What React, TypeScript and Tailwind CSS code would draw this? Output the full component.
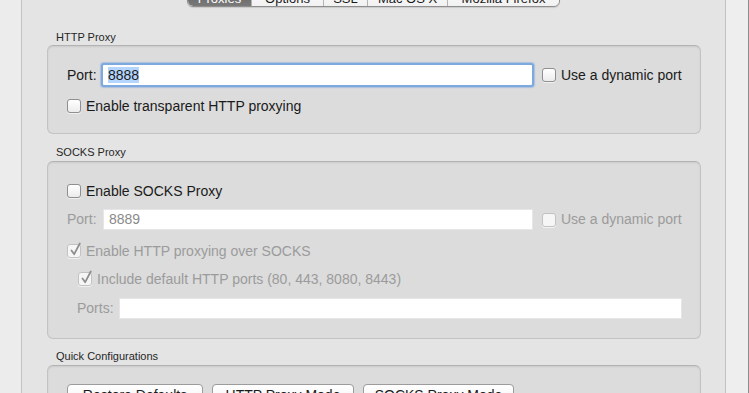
import React from "react";

const F = { fontFamily: '"Liberation Sans", Arial, sans-serif' };

function Check({ checked = false, disabled = false }: { checked?: boolean; disabled?: boolean }) {
  return (
    <div
      className={`relative w-[14px] h-[14px] shrink-0 rounded-[3px] border ${
        disabled ? "border-[#c2c2c2] bg-[#f6f6f6]" : "border-[#8f8f8f] bg-gradient-to-b from-white to-[#ececec]"
      } shadow-[0_1px_0_rgba(255,255,255,0.6)]`}
    >
      {checked && (
        <svg className="absolute left-[1px] top-[-3px]" width="13" height="15" viewBox="0 0 13 15">
          <path d="M2.5 8.5 L5.2 12.2 L10.8 1.5" fill="none" stroke={disabled ? "#8f8f8f" : "#222"} strokeWidth="1.8" strokeLinecap="round" strokeLinejoin="round" />
        </svg>
      )}
    </div>
  );
}

function Tab({ label, w, selected = false, last = false }: { label: string; w: number; selected?: boolean; last?: boolean }) {
  return (
    <div
      className={`h-full flex items-end justify-center pb-[1px] text-[13px] leading-[13px] ${
        selected
          ? "bg-gradient-to-b from-[#5c5c5c] to-[#7a7a7a] text-white rounded-bl-[5px]"
          : "bg-gradient-to-b from-white to-[#f1f1f1] text-[#1a1a1a]"
      } ${last ? "rounded-br-[5px]" : "border-r border-[#b4b4b4]"}`}
      style={{ width: w }}
    >
      {label}
    </div>
  );
}

function SectionLabel({ children, className = "" }: { children: React.ReactNode; className?: string }) {
  return <div className={`h-[14px] leading-[14px] text-[11px] text-[#262626] pl-[9px] ${className}`}>{children}</div>;
}

function Group({ children, className = "" }: { children: React.ReactNode; className?: string }) {
  return (
    <div
      className={`w-[654px] rounded-[6px] border border-[#c3c3c3] border-t-[#b3b3b3] bg-[#dcdcdc] shadow-[inset_0_1px_2px_rgba(0,0,0,0.08)] ${className}`}
    >
      {children}
    </div>
  );
}

function Button({ label, w }: { label: string; w: number }) {
  return (
    <div
      className="h-[22px] shrink-0 rounded-[4px] border border-[#9c9c9c] bg-gradient-to-b from-white to-[#f2f2f2] shadow-[0_1px_0_rgba(0,0,0,0.08)] flex items-center justify-center text-[14px] leading-[16px] text-[#1a1a1a]"
      style={{ width: w }}
    >
      {label}
    </div>
  );
}

export default function App() {
  return (
    <div className="w-[749px] h-[393px] overflow-hidden bg-[#ececec] flex" style={F}>
      <div className="w-[21px] shrink-0" />
      <div className="w-[705px] shrink-0 h-full bg-[#e4e4e4] border-x border-[#c2c2c2] flex flex-col pl-[25px]">
        {/* tabs */}
        <div className="flex justify-center -ml-[25px] h-[22px] -mt-[15px] shrink-0">
          <div className="flex h-full border border-[#8e8e8e] rounded-b-[6px] shadow-[0_1px_1px_rgba(0,0,0,0.12)] overflow-hidden">
            <Tab label="Proxies" w={64} selected />
            <Tab label="Options" w={72} />
            <Tab label="SSL" w={44} />
            <Tab label="Mac OS X" w={80} />
            <Tab label="Mozilla Firefox" w={111} last />
          </div>
        </div>

        <SectionLabel className="mt-[23px] mb-[1px]">HTTP Proxy</SectionLabel>
        <Group className="pt-[17px] pb-[20px] pl-[19px]">
          <div className="flex items-center h-[24px] text-[14px] text-[#1a1a1a]">
            <div className="w-[34px]">Port:</div>
            <div className="w-[433px] h-[24px] rounded-[3px] border-2 border-[#7ea9df] bg-white shadow-[0_0_1px_1px_rgba(120,165,225,0.5)] flex items-center pl-[5px]">
              <span className="bg-[#b4d5fe] leading-[16px]">8888</span>
            </div>
            <div className="ml-[8px]">
              <Check />
            </div>
            <div className="ml-[5px]">Use a dynamic port</div>
          </div>
          <div className="flex items-center h-[14px] mt-[12px] text-[14px] text-[#1a1a1a]">
            <Check />
            <div className="ml-[5px]">Enable transparent HTTP proxying</div>
          </div>
        </Group>

        <SectionLabel className="mt-[11px] mb-[2px]">SOCKS Proxy</SectionLabel>
        <Group className="pt-[22px] pb-[19px] pl-[19px] text-[14px]">
          <div className="flex items-center h-[14px] text-[#1a1a1a]">
            <Check />
            <div className="ml-[5px]">Enable SOCKS Proxy</div>
          </div>
          <div className="flex items-center h-[21px] mt-[11px] text-[#9b9b9b]">
            <div className="w-[36px]">Port:</div>
            <div className="w-[430px] h-[21px] bg-white border border-[#e6e6e6] flex items-center pl-[5px] text-[#8a8a8a]">8889</div>
            <div className="ml-[9px]">
              <Check disabled />
            </div>
            <div className="ml-[5px]">Use a dynamic port</div>
          </div>
          <div className="flex items-center h-[14px] mt-[14px] text-[#9b9b9b]">
            <Check checked disabled />
            <div className="ml-[5px]">Enable HTTP proxying over SOCKS</div>
          </div>
          <div className="flex items-center h-[14px] mt-[14px] ml-[11px] text-[#9b9b9b]">
            <Check checked disabled />
            <div className="ml-[5px]">Include default HTTP ports (80, 443, 8080, 8443)</div>
          </div>
          <div className="flex items-center h-[21px] mt-[12px] ml-[10px] text-[#9b9b9b]">
            <div className="w-[42px]">Ports:</div>
            <div className="w-[563px] h-[21px] bg-white border border-[#e6e6e6]" />
          </div>
        </Group>

        <SectionLabel className="mt-[10px] mb-[2px]">Quick Configurations</SectionLabel>
        <Group className="pt-[18px] pl-[19px] h-[60px]">
          <div className="flex gap-[9px]">
            <Button label="Restore Defaults" w={136} />
            <Button label="HTTP Proxy Mode" w={142} />
            <Button label="SOCKS Proxy Mode" w={151} />
          </div>
        </Group>
      </div>
      <div className="flex-1 h-full bg-[#eeeeee] border-r border-[#8c8c8c]" />
    </div>
  );
}
